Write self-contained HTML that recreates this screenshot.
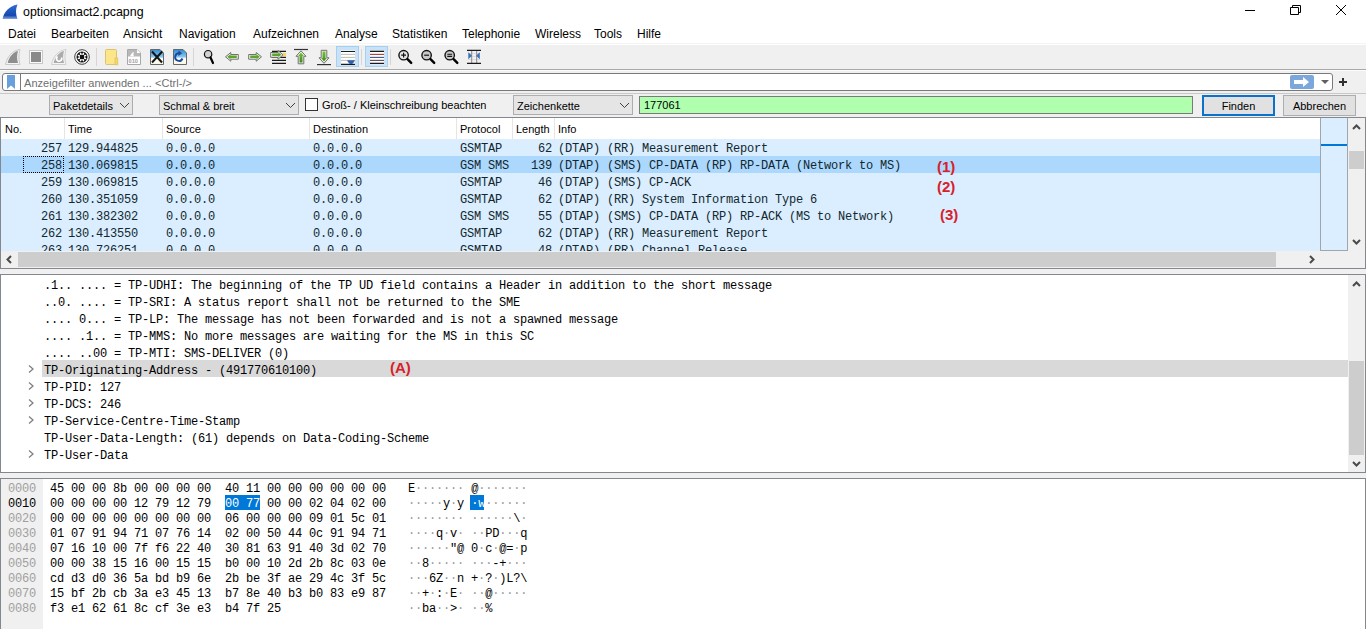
<!DOCTYPE html>
<html><head><meta charset="utf-8">
<style>
*{margin:0;padding:0;box-sizing:border-box}
html,body{width:1366px;height:629px;overflow:hidden;background:#f0f0f0;font-family:"Liberation Sans",sans-serif;font-size:12px;color:#000;position:relative}
.abs{position:absolute}
svg{display:block}
.menu span{position:absolute;top:27px}
.m{position:absolute;top:2px;white-space:pre;font-family:"Liberation Mono",monospace;font-size:12px;letter-spacing:-0.2px;line-height:17px;color:#12272e}
.m2{white-space:pre;font-family:"Liberation Mono",monospace;font-size:12px;letter-spacing:-0.2px;line-height:17px;color:#000}
.m3{white-space:pre;font-family:"Liberation Mono",monospace;font-size:12px;letter-spacing:-0.2px;line-height:15px;color:#000}
.d{color:#9a9a9a}
.htxt{white-space:pre;color:#000;font-size:11px}
.red{color:#d8202a;font-weight:bold;font-size:15px;line-height:17px;white-space:pre}
.combo{position:absolute;background:#e5e5e5;border:1px solid #adadad;height:20px;top:95px;padding-left:3px;padding-top:1px;line-height:18px;white-space:pre;font-size:11px}
.btn{position:absolute;background:#e1e1e1;border:1px solid #adadad;height:21px;top:95px;text-align:center;line-height:19px;font-size:11px;padding-top:1px}
</style></head><body>
<div class="abs" style="left:0;top:0;width:1366px;height:45px;background:#fff"></div>
<svg class="abs" style="left:1px;top:3px" width="18" height="17"><defs><linearGradient id="fg" x1="0" y1="0" x2="0" y2="1"><stop offset="0" stop-color="#2f6fd0"/><stop offset="0.75" stop-color="#1448b0"/><stop offset="1" stop-color="#8aa8e0"/></linearGradient></defs><path d="M1.5 16 C3 9 8 3 16.5 1.5 C14.5 6 14.5 11 16.5 16 Z" fill="url(#fg)"/></svg>
<div class="abs" style="left:23px;top:5px;font-size:12.4px;white-space:pre">optionsimact2.pcapng</div>
<svg class="abs" style="left:1230px;top:0" width="136" height="22" viewBox="1230 0 136 22"><path d="M1245 10.5 H1255" stroke="#000" stroke-width="1"/><path d="M1290.5 7.5 H1298.5 V14.5 H1290.5 Z M1292.5 7.5 V5.5 H1300.5 V12.5 H1298.5" fill="none" stroke="#000" stroke-width="1"/><path d="M1336 5 L1346 15 M1346 5 L1336 15" stroke="#000" stroke-width="1"/></svg>
<div class="menu">
  <span style="left:8px">Datei</span>
  <span style="left:51px">Bearbeiten</span>
  <span style="left:123px">Ansicht</span>
  <span style="left:179px">Navigation</span>
  <span style="left:253px">Aufzeichnen</span>
  <span style="left:335px">Analyse</span>
  <span style="left:392px">Statistiken</span>
  <span style="left:462px">Telephonie</span>
  <span style="left:535px">Wireless</span>
  <span style="left:594px">Tools</span>
  <span style="left:637px">Hilfe</span>
</div>
<div class="abs" style="left:0;top:45px;width:1366px;height:24px;background:#f0f0f0"></div>
<div class="abs" style="left:0;top:69px;width:1366px;height:1px;background:#a8a8a8"></div>
<div class="abs" style="left:0;top:70px;width:1366px;height:1px;background:#fcfcfc"></div>
<div class="abs" style="left:0;top:43px;width:1366px;height:1px;background:#f4f4f4"></div>
<!-- filter bar -->
<div class="abs" style="left:2px;top:73px;width:1331px;height:18px;background:#fff;border:1px solid #7a7a7a;border-radius:3px"></div>
<svg class="abs" style="left:7px;top:75px" width="9" height="14"><path d="M0 0 H8 V14 L4 10.5 L0 14 Z" fill="#6a9fdd"/></svg>
<div class="abs" style="left:20px;top:74px;width:1px;height:16px;background:#7a7a7a"></div>
<div class="abs" style="left:24px;top:77px;color:#6e6e6e;white-space:pre;font-size:11px;letter-spacing:0.05px">Anzeigefilter anwenden ... &lt;Ctrl-/&gt;</div>
<div class="abs" style="left:1290px;top:75px;width:24px;height:14px;background:#7ba7dd;border-radius:2px"></div>
<svg class="abs" style="left:1292px;top:76px" width="20" height="12"><path d="M2 4 H11 V1 L17 6 L11 11 V8 H2 Z" fill="#fff"/></svg>
<svg class="abs" style="left:1320px;top:79px" width="10" height="6"><path d="M1 1 H9 L5 5 Z" fill="#606060"/></svg>
<svg class="abs" style="left:1338px;top:77px" width="10" height="10"><path d="M5 1 V9 M1 5 H9" stroke="#303030" stroke-width="2"/></svg>
<div class="abs" style="left:0;top:93px;width:1366px;height:1px;background:#c8c8c8"></div>
<!-- find bar -->
<div class="combo" style="left:49px;width:84px">Paketdetails</div>
<svg class="abs" style="left:119px;top:102px" width="11" height="7"><path d="M1 1 L5.5 5.5 L10 1" fill="none" stroke="#404040" stroke-width="1"/></svg>
<div class="combo" style="left:159px;width:140px">Schmal &amp; breit</div>
<svg class="abs" style="left:285px;top:102px" width="11" height="7"><path d="M1 1 L5.5 5.5 L10 1" fill="none" stroke="#404040" stroke-width="1"/></svg>
<div class="abs" style="left:305px;top:98px;width:13px;height:13px;background:#fff;border:1px solid #333"></div>
<div class="abs" style="left:322px;top:99px;white-space:pre;font-size:11px">Groß- / Kleinschreibung beachten</div>
<div class="combo" style="left:513px;width:120px">Zeichenkette</div>
<svg class="abs" style="left:619px;top:102px" width="11" height="7"><path d="M1 1 L5.5 5.5 L10 1" fill="none" stroke="#404040" stroke-width="1"/></svg>
<div class="abs" style="left:639px;top:96px;width:554px;height:18px;background:#afffaf;border:1px solid #7a7a7a;padding-left:4px;line-height:17px;font-size:11px">177061</div>
<div class="btn" style="left:1202px;width:73px;border:2px solid #0a72cc;line-height:17px">Finden</div>
<div class="btn" style="left:1283px;width:73px">Abbrechen</div>

<!-- toolbar -->
<div class="abs" style="left:336px;top:46px;width:23px;height:21px;background:#c9e2f8;border:1px solid #a6cff0"></div>
<div class="abs" style="left:365px;top:46px;width:23px;height:21px;background:#c9e2f8;border:1px solid #a6cff0"></div>
<svg class="abs" style="left:0;top:0" width="500" height="70" viewBox="0 0 500 70">
<defs>
 <linearGradient id="bl" x1="0" y1="0" x2="0" y2="1"><stop offset="0" stop-color="#2a8ad6"/><stop offset="0.5" stop-color="#8cc8ee"/><stop offset="0.6" stop-color="#ffffff"/><stop offset="1" stop-color="#f8f6e0"/></linearGradient>
 <linearGradient id="gr" x1="0" y1="0" x2="0" y2="1"><stop offset="0" stop-color="#7cc040"/><stop offset="1" stop-color="#3d8a1a"/></linearGradient>
</defs>
<!-- separators -->
<path d="M96.5 48 V66 M193.5 48 V66 M361.5 49 V65 M390.5 49 V65" stroke="#d6d6d6" stroke-width="1"/>
<!-- 1 fin -->
<path d="M5.5 64.5 C7 57 12 50.5 20 49.5 C18.5 54 18.5 60 20 64.5 Z" fill="#f4f4f4" stroke="#c8c8c8" stroke-width="1"/>
<path d="M7.7 63 C9 57 13 52 18 51 C16.8 55 16.8 59 18 63 Z" fill="#8e8e8e"/>
<!-- 2 stop -->
<rect x="29.5" y="50.5" width="13" height="13" fill="#fafafa" stroke="#c8c8c8"/>
<rect x="31" y="52" width="10" height="10" fill="#8a8a8a"/>
<!-- 3 restart fin -->
<path d="M51.5 64.5 C53 57 58 50.5 66 49.5 C64.5 54 64.5 60 66 64.5 Z" fill="#f4f4f4" stroke="#cfcfcf" stroke-width="1"/>
<path d="M53.7 63 C55 57 59 52 64 51 C62.8 55 62.8 59 64 63 Z" fill="#ababab"/>
<path d="M57.5 56.5 A2.6 2.6 0 1 0 61.5 57.5" fill="none" stroke="#fff" stroke-width="1.6"/>
<!-- 4 gear -->
<circle cx="82" cy="57" r="7.3" fill="#fff" stroke="#2a2a2a" stroke-width="0.9"/>
<circle cx="82" cy="57" r="5.5" fill="#151515"/>
<path d="M82.46 53.83 L83.24 52.57 L84.26 52.99 L83.92 54.44 L84.56 55.08 L86.01 54.74 L86.43 55.76 L85.17 56.54 L85.17 57.46 L86.43 58.24 L86.01 59.26 L84.56 58.92 L83.92 59.56 L84.26 61.01 L83.24 61.43 L82.46 60.17 L81.54 60.17 L80.76 61.43 L79.74 61.01 L80.08 59.56 L79.44 58.92 L77.99 59.26 L77.57 58.24 L78.83 57.46 L78.83 56.54 L77.57 55.76 L77.99 54.74 L79.44 55.08 L80.08 54.44 L79.74 52.99 L80.76 52.57 L81.54 53.83 Z" fill="#fff"/>
<rect x="79.8" y="54.8" width="4.4" height="4.4" rx="1" fill="#111"/>
<!-- 5 folder -->
<rect x="105.5" y="49.5" width="11" height="15" rx="1" fill="#fde58a" stroke="#dcc46e"/>
<rect x="115" y="58" width="2.8" height="6.8" fill="#f8d860" stroke="#dcc46e" stroke-width="0.8"/>
<!-- 6 save doc -->
<path d="M127.5 49.5 H137 L140.5 53 V64.5 H127.5 Z" fill="#fff" stroke="#a8a8a8"/>
<path d="M128 50 H136.8 L140 53.2 V56.5 H128 Z" fill="#b8b8b8"/>
<path d="M137 49.8 V53 H140.3" fill="#fff"/>
<path d="M130 56.3 C131 54 132 52.5 134 52 C133.3 53.5 133.3 55 134 56.3 Z" fill="#fff"/>
<text x="128.6" y="62.6" font-family="Liberation Sans" font-size="5.6" font-weight="bold" fill="#a0a0a0">010</text>
<!-- 7 close doc -->
<path d="M150.5 49.5 H160 L163.5 53 V64.5 H150.5 Z" fill="url(#bl)" stroke="#686868"/>
<path d="M152 51.5 L162 62.5 M162.2 51.5 L152 62.5" stroke="#141414" stroke-width="2"/>
<!-- 8 reload doc -->
<path d="M173.5 49.5 H183 L186.5 53 V64.5 H173.5 Z" fill="url(#bl)" stroke="#686868"/>
<path d="M182.5 58.5 A3.8 3.8 0 1 1 179.6 53.3" fill="none" stroke="#1e4c9c" stroke-width="2"/>
<path d="M178.5 50.6 L182.2 53.3 L178.3 56 Z" fill="#1e4c9c"/>
<!-- 9 find -->
<circle cx="208.1" cy="54.2" r="3.7" fill="#d2d2d2" stroke="#111" stroke-width="1.2"/>
<path d="M210.5 57.5 L213 63" stroke="#000" stroke-width="2.2" stroke-linecap="round"/>
<!-- 10 left arrow -->
<path d="M225.5 56.8 L230.8 52.5 V54.5 H238.3 V59.2 H230.8 V61.2 Z" fill="#eef8e6" stroke="#707070" stroke-width="1"/>
<path d="M227.3 56.8 L230.5 54.2 V55.6 H236.8 V58 H230.5 V59.4 Z" fill="#5da52a"/>
<!-- 11 right arrow -->
<path d="M261.5 56.8 L256.2 52.5 V54.5 H248.7 V59.2 H256.2 V61.2 Z" fill="#eef8e6" stroke="#707070" stroke-width="1"/>
<path d="M259.7 56.8 L256.5 54.2 V55.6 H250.2 V58 H256.5 V59.4 Z" fill="#5da52a"/>
<!-- 12 go to packet -->
<path d="M272 51.4 H286 M272 57.4 H286 M272 60.4 H286 M272 63.4 H286" stroke="#1a1a1a" stroke-width="1.1"/>
<rect x="283" y="53" width="3" height="3.2" fill="#f5d860"/>
<path d="M283 54.8 L278 50.5 V52.5 H270.7 V57.3 H278 V59.3 Z" fill="#eef8e6" stroke="#707070" stroke-width="1"/>
<path d="M281.3 54.8 L278.3 52.3 V53.6 H272.2 V56 H278.3 V57.3 Z" fill="#5da52a"/>
<!-- 13 first packet -->
<path d="M294 49.5 H308" stroke="#333" stroke-width="1.2"/>
<path d="M301 50.8 L306 56.3 H303.8 V63.8 H298.2 V56.3 H296 Z" fill="#eef8e6" stroke="#707070" stroke-width="1"/>
<path d="M301 52.5 L303.8 56 H302.5 V62.5 H299.5 V56 H298.2 Z" fill="url(#gr)"/>
<!-- 14 last packet -->
<path d="M317 64.6 H331" stroke="#333" stroke-width="1.2"/>
<path d="M324 63.3 L329 57.8 H326.8 V50.3 H321.2 V57.8 H319 Z" fill="#eef8e6" stroke="#707070" stroke-width="1"/>
<path d="M324 61.6 L326.8 58.1 H325.5 V51.6 H322.5 V58.1 H321.2 Z" fill="url(#gr)"/>
<!-- 15 autoscroll -->
<rect x="341" y="50.5" width="14" height="14.5" fill="#fff"/>
<path d="M341 51.5 H355 M341 64.4 H355" stroke="#1a1a1a" stroke-width="1.1"/>
<path d="M341 54.4 H355 M341 57.4 H355 M341 60.4 H355" stroke="#b4b4ac" stroke-width="0.9"/>
<path d="M347.2 60.2 H354.8 C354.5 62 353 63.3 351.8 64 H350.2 C349 63.3 347.5 62 347.2 60.2 Z" fill="#2f62ab"/>
<!-- 16 colorize -->
<rect x="370" y="50.8" width="14" height="13.5" fill="#fff"/>
<path d="M370 51.4 H384 M370 63.4 H384" stroke="#1a1a1a" stroke-width="1.1"/>
<path d="M370 54.4 H384" stroke="#b03a30" stroke-width="1.1"/>
<path d="M370 57.4 H384" stroke="#2f5a8a" stroke-width="1.1"/>
<path d="M370 60.4 H384" stroke="#604060" stroke-width="1.1"/>
<!-- 17 zoom in -->
<circle cx="403.6" cy="55.2" r="4.7" fill="#e4e4e4" stroke="#111" stroke-width="1.4"/>
<path d="M407.5 59.2 L411.2 62.9" stroke="#000" stroke-width="2.4" stroke-linecap="round"/>
<path d="M401.2 55.2 H406 M403.6 52.8 V57.6" stroke="#111" stroke-width="1.2"/>
<!-- 18 zoom out -->
<circle cx="426.6" cy="55.2" r="4.7" fill="#c8c8c8" stroke="#111" stroke-width="1.4"/>
<path d="M430.5 59.2 L434.2 62.9" stroke="#000" stroke-width="2.4" stroke-linecap="round"/>
<path d="M424.2 55.2 H429" stroke="#111" stroke-width="1.2"/>
<!-- 19 zoom 100 -->
<circle cx="449.7" cy="55.2" r="4.7" fill="#c8c8c8" stroke="#111" stroke-width="1.4"/>
<path d="M453.6 59.2 L457.3 62.9" stroke="#000" stroke-width="2.4" stroke-linecap="round"/>
<path d="M447.3 54.2 H452.1 M447.3 56.4 H452.1" stroke="#111" stroke-width="1.1"/>
<!-- 20 resize columns -->
<path d="M468 53.5 H480 M468 56.5 H480 M468 59.5 H480" stroke="#d8d8d8" stroke-width="0.8"/>
<path d="M471.7 50.5 V63.5 M476.7 50.5 V63.5" stroke="#8a8a8a" stroke-width="1"/>
<path d="M467 50.4 H481 M467 63.4 H481" stroke="#1a1a1a" stroke-width="1.1"/>
<path d="M468.3 52.3 L472 55.8 L468.3 59.3 Z M479.8 52.3 L476.1 55.8 L479.8 59.3 Z" fill="#3a72c0"/>
</svg>

<div class="abs" style="left:0;top:117px;width:1366px;height:152px;border:1px solid #828790;background:#fff"></div>
<div class="abs hdr" style="left:1px;top:118px;width:1319px;height:21px"></div>
<div class="abs" style="left:64px;top:118px;width:1px;height:21px;background:#e5e5e5"></div>
<div class="abs" style="left:162px;top:118px;width:1px;height:21px;background:#e5e5e5"></div>
<div class="abs" style="left:309px;top:118px;width:1px;height:21px;background:#e5e5e5"></div>
<div class="abs" style="left:456px;top:118px;width:1px;height:21px;background:#e5e5e5"></div>
<div class="abs" style="left:512px;top:118px;width:1px;height:21px;background:#e5e5e5"></div>
<div class="abs" style="left:554px;top:118px;width:1px;height:21px;background:#e5e5e5"></div>
<div class="abs htxt" style="left:5px;top:123px">No.</div>
<div class="abs htxt" style="left:68px;top:123px">Time</div>
<div class="abs htxt" style="left:166px;top:123px">Source</div>
<div class="abs htxt" style="left:313px;top:123px">Destination</div>
<div class="abs htxt" style="left:460px;top:123px">Protocol</div>
<div class="abs htxt" style="left:516px;top:123px">Length</div>
<div class="abs htxt" style="left:558px;top:123px">Info</div>
<div class="abs" style="left:1px;top:139px;width:1319px;height:17px;background:#daeeff;overflow:hidden">
<span class="m" style="left:40px">257</span>
<span class="m" style="left:67px">129.944825</span>
<span class="m" style="left:165px">0.0.0.0</span>
<span class="m" style="left:312px">0.0.0.0</span>
<span class="m" style="left:459px">GSMTAP</span>
<span class="m" style="left:537px">62</span>
<span class="m" style="left:557px">(DTAP) (RR) Measurement Report</span>
</div>
<div class="abs" style="left:1px;top:156px;width:1319px;height:17px;background:#acd8fe;overflow:hidden">
<span class="m" style="left:40px">258</span>
<span class="m" style="left:67px">130.069815</span>
<span class="m" style="left:165px">0.0.0.0</span>
<span class="m" style="left:312px">0.0.0.0</span>
<span class="m" style="left:459px">GSM SMS</span>
<span class="m" style="left:530px">139</span>
<span class="m" style="left:557px">(DTAP) (SMS) CP-DATA (RP) RP-DATA (Network to MS)</span>
</div>
<div class="abs" style="left:1px;top:173px;width:1319px;height:17px;background:#daeeff;overflow:hidden">
<span class="m" style="left:40px">259</span>
<span class="m" style="left:67px">130.069815</span>
<span class="m" style="left:165px">0.0.0.0</span>
<span class="m" style="left:312px">0.0.0.0</span>
<span class="m" style="left:459px">GSMTAP</span>
<span class="m" style="left:537px">46</span>
<span class="m" style="left:557px">(DTAP) (SMS) CP-ACK</span>
</div>
<div class="abs" style="left:1px;top:190px;width:1319px;height:17px;background:#daeeff;overflow:hidden">
<span class="m" style="left:40px">260</span>
<span class="m" style="left:67px">130.351059</span>
<span class="m" style="left:165px">0.0.0.0</span>
<span class="m" style="left:312px">0.0.0.0</span>
<span class="m" style="left:459px">GSMTAP</span>
<span class="m" style="left:537px">62</span>
<span class="m" style="left:557px">(DTAP) (RR) System Information Type 6</span>
</div>
<div class="abs" style="left:1px;top:207px;width:1319px;height:17px;background:#daeeff;overflow:hidden">
<span class="m" style="left:40px">261</span>
<span class="m" style="left:67px">130.382302</span>
<span class="m" style="left:165px">0.0.0.0</span>
<span class="m" style="left:312px">0.0.0.0</span>
<span class="m" style="left:459px">GSM SMS</span>
<span class="m" style="left:537px">55</span>
<span class="m" style="left:557px">(DTAP) (SMS) CP-DATA (RP) RP-ACK (MS to Network)</span>
</div>
<div class="abs" style="left:1px;top:224px;width:1319px;height:17px;background:#daeeff;overflow:hidden">
<span class="m" style="left:40px">262</span>
<span class="m" style="left:67px">130.413550</span>
<span class="m" style="left:165px">0.0.0.0</span>
<span class="m" style="left:312px">0.0.0.0</span>
<span class="m" style="left:459px">GSMTAP</span>
<span class="m" style="left:537px">62</span>
<span class="m" style="left:557px">(DTAP) (RR) Measurement Report</span>
</div>
<div class="abs" style="left:1px;top:241px;width:1319px;height:10px;background:#daeeff;overflow:hidden">
<span class="m" style="left:40px">263</span>
<span class="m" style="left:67px">130.726251</span>
<span class="m" style="left:165px">0.0.0.0</span>
<span class="m" style="left:312px">0.0.0.0</span>
<span class="m" style="left:459px">GSMTAP</span>
<span class="m" style="left:537px">48</span>
<span class="m" style="left:557px">(DTAP) (RR) Channel Release</span>
</div>
<div class="abs" style="left:23px;top:156px;width:41px;height:17px;border:1px dotted #000"></div>
<div class="abs red" style="left:937px;top:158px">(1)</div>
<div class="abs red" style="left:937px;top:178px">(2)</div>
<div class="abs red" style="left:940px;top:206px">(3)</div>
<div class="abs" style="left:1320px;top:118px;width:28px;height:133px;background:#daeeff;border-left:1px solid #a0a6ae;border-right:1px solid #a0a6ae;border-bottom:1px solid #a0a6ae"></div>
<div class="abs" style="left:1321px;top:144px;width:26px;height:2px;background:#0078d7"></div>
<div class="abs" style="left:1348px;top:118px;width:17px;height:133px;background:#f0f0f0"></div>
<div class="abs" style="left:1349px;top:151px;width:15px;height:18px;background:#cdcdcd"></div>
<svg class="abs" style="left:1352px;top:123px" width="9" height="8"><path d="M1 6 L4.5 2.5 L8 6" fill="none" stroke="#4a4a4a" stroke-width="2"/></svg>
<svg class="abs" style="left:1352px;top:238px" width="9" height="8"><path d="M1 2 L4.5 5.5 L8 2" fill="none" stroke="#4a4a4a" stroke-width="2"/></svg>
<div class="abs" style="left:1px;top:251px;width:1364px;height:17px;background:#f0f0f0"></div>
<div class="abs" style="left:18px;top:252px;width:1258px;height:15px;background:#cdcdcd"></div>
<svg class="abs" style="left:5px;top:255px" width="8" height="9"><path d="M6 1 L2.5 4.5 L6 8" fill="none" stroke="#4a4a4a" stroke-width="2"/></svg>
<svg class="abs" style="left:1308px;top:255px" width="8" height="9"><path d="M2 1 L5.5 4.5 L2 8" fill="none" stroke="#4a4a4a" stroke-width="2"/></svg>
<div class="abs" style="left:0;top:274px;width:1366px;height:199px;border:1px solid #828790;background:#fff"></div>
<div class="abs m2" style="left:44px;top:278px">.1.. .... = TP-UDHI: The beginning of the TP UD field contains a Header in addition to the short message</div>
<div class="abs m2" style="left:44px;top:295px">..0. .... = TP-SRI: A status report shall not be returned to the SME</div>
<div class="abs m2" style="left:44px;top:312px">.... 0... = TP-LP: The message has not been forwarded and is not a spawned message</div>
<div class="abs m2" style="left:44px;top:329px">.... .1.. = TP-MMS: No more messages are waiting for the MS in this SC</div>
<div class="abs m2" style="left:44px;top:346px">.... ..00 = TP-MTI: SMS-DELIVER (0)</div>
<div class="abs" style="left:42px;top:360px;width:1306px;height:17px;background:#d9d9d9"></div>
<svg class="abs" style="left:27px;top:364px" width="8" height="10"><path d="M2 1.5 L6 5 L2 8.5" fill="none" stroke="#808080" stroke-width="1.3"/></svg>
<div class="abs m2" style="left:44px;top:363px">TP-Originating-Address - (491770610100)</div>
<svg class="abs" style="left:27px;top:381px" width="8" height="10"><path d="M2 1.5 L6 5 L2 8.5" fill="none" stroke="#808080" stroke-width="1.3"/></svg>
<div class="abs m2" style="left:44px;top:380px">TP-PID: 127</div>
<svg class="abs" style="left:27px;top:398px" width="8" height="10"><path d="M2 1.5 L6 5 L2 8.5" fill="none" stroke="#808080" stroke-width="1.3"/></svg>
<div class="abs m2" style="left:44px;top:397px">TP-DCS: 246</div>
<svg class="abs" style="left:27px;top:415px" width="8" height="10"><path d="M2 1.5 L6 5 L2 8.5" fill="none" stroke="#808080" stroke-width="1.3"/></svg>
<div class="abs m2" style="left:44px;top:414px">TP-Service-Centre-Time-Stamp</div>
<div class="abs m2" style="left:44px;top:431px">TP-User-Data-Length: (61) depends on Data-Coding-Scheme</div>
<svg class="abs" style="left:27px;top:449px" width="8" height="10"><path d="M2 1.5 L6 5 L2 8.5" fill="none" stroke="#808080" stroke-width="1.3"/></svg>
<div class="abs m2" style="left:44px;top:448px">TP-User-Data</div>
<div class="abs red" style="left:390px;top:359px">(A)</div>
<div class="abs" style="left:1348px;top:275px;width:17px;height:197px;background:#f0f0f0"></div>
<div class="abs" style="left:1349px;top:361px;width:15px;height:94px;background:#cdcdcd"></div>
<svg class="abs" style="left:1352px;top:280px" width="9" height="8"><path d="M1 6 L4.5 2.5 L8 6" fill="none" stroke="#4a4a4a" stroke-width="2"/></svg>
<svg class="abs" style="left:1352px;top:460px" width="9" height="8"><path d="M1 2 L4.5 5.5 L8 2" fill="none" stroke="#4a4a4a" stroke-width="2"/></svg>
<div class="abs" style="left:0;top:478px;width:1366px;height:160px;border:1px solid #828790;background:#fff"></div>
<div class="abs" style="left:1px;top:479px;width:42px;height:150px;background:#f0f0f0"></div>
<div class="abs m3" style="left:8px;top:482px;color:#a0a0a0">0000</div>
<div class="abs m3" style="left:50px;top:482px">45 00 00 8b 00 00 00 00  40 11 00 00 00 00 00 00</div>
<div class="abs m3" style="left:408px;top:482px">E<span class="d">·</span><span class="d">·</span><span class="d">·</span><span class="d">·</span><span class="d">·</span><span class="d">·</span><span class="d">·</span> @<span class="d">·</span><span class="d">·</span><span class="d">·</span><span class="d">·</span><span class="d">·</span><span class="d">·</span><span class="d">·</span></div>
<div class="abs m3" style="left:8px;top:497px;color:#000">0010</div>
<div class="abs" style="left:225px;top:495px;width:35px;height:15px;background:#0078d7"></div>
<div class="abs" style="left:470px;top:495px;width:14px;height:15px;background:#0078d7"></div>
<div class="abs m3" style="left:50px;top:497px">00 00 00 00 12 79 12 79  <span style="color:#fff">00 77</span> 00 00 02 04 02 00</div>
<div class="abs m3" style="left:408px;top:497px"><span class="d">·</span><span class="d">·</span><span class="d">·</span><span class="d">·</span><span class="d">·</span>y<span class="d">·</span>y <span style="color:#fff">·w</span><span class="d">·</span><span class="d">·</span><span class="d">·</span><span class="d">·</span><span class="d">·</span><span class="d">·</span></div>
<div class="abs m3" style="left:8px;top:512px;color:#a0a0a0">0020</div>
<div class="abs m3" style="left:50px;top:512px">00 00 00 00 00 00 00 00  06 00 00 00 09 01 5c 01</div>
<div class="abs m3" style="left:408px;top:512px"><span class="d">·</span><span class="d">·</span><span class="d">·</span><span class="d">·</span><span class="d">·</span><span class="d">·</span><span class="d">·</span><span class="d">·</span> <span class="d">·</span><span class="d">·</span><span class="d">·</span><span class="d">·</span><span class="d">·</span><span class="d">·</span>\<span class="d">·</span></div>
<div class="abs m3" style="left:8px;top:527px;color:#a0a0a0">0030</div>
<div class="abs m3" style="left:50px;top:527px">01 07 91 94 71 07 76 14  02 00 50 44 0c 91 94 71</div>
<div class="abs m3" style="left:408px;top:527px"><span class="d">·</span><span class="d">·</span><span class="d">·</span><span class="d">·</span>q<span class="d">·</span>v<span class="d">·</span> <span class="d">·</span><span class="d">·</span>PD<span class="d">·</span><span class="d">·</span><span class="d">·</span>q</div>
<div class="abs m3" style="left:8px;top:542px;color:#a0a0a0">0040</div>
<div class="abs m3" style="left:50px;top:542px">07 16 10 00 7f f6 22 40  30 81 63 91 40 3d 02 70</div>
<div class="abs m3" style="left:408px;top:542px"><span class="d">·</span><span class="d">·</span><span class="d">·</span><span class="d">·</span><span class="d">·</span><span class="d">·</span>&quot;@ 0<span class="d">·</span>c<span class="d">·</span>@=<span class="d">·</span>p</div>
<div class="abs m3" style="left:8px;top:557px;color:#a0a0a0">0050</div>
<div class="abs m3" style="left:50px;top:557px">00 00 38 15 16 00 15 15  b0 00 10 2d 2b 8c 03 0e</div>
<div class="abs m3" style="left:408px;top:557px"><span class="d">·</span><span class="d">·</span>8<span class="d">·</span><span class="d">·</span><span class="d">·</span><span class="d">·</span><span class="d">·</span> <span class="d">·</span><span class="d">·</span><span class="d">·</span>-+<span class="d">·</span><span class="d">·</span><span class="d">·</span></div>
<div class="abs m3" style="left:8px;top:572px;color:#a0a0a0">0060</div>
<div class="abs m3" style="left:50px;top:572px">cd d3 d0 36 5a bd b9 6e  2b be 3f ae 29 4c 3f 5c</div>
<div class="abs m3" style="left:408px;top:572px"><span class="d">·</span><span class="d">·</span><span class="d">·</span>6Z<span class="d">·</span><span class="d">·</span>n +<span class="d">·</span>?<span class="d">·</span>)L?\</div>
<div class="abs m3" style="left:8px;top:587px;color:#a0a0a0">0070</div>
<div class="abs m3" style="left:50px;top:587px">15 bf 2b cb 3a e3 45 13  b7 8e 40 b3 b0 83 e9 87</div>
<div class="abs m3" style="left:408px;top:587px"><span class="d">·</span><span class="d">·</span>+<span class="d">·</span>:<span class="d">·</span>E<span class="d">·</span> <span class="d">·</span><span class="d">·</span>@<span class="d">·</span><span class="d">·</span><span class="d">·</span><span class="d">·</span><span class="d">·</span></div>
<div class="abs m3" style="left:8px;top:602px;color:#a0a0a0">0080</div>
<div class="abs m3" style="left:50px;top:602px">f3 e1 62 61 8c cf 3e e3  b4 7f 25</div>
<div class="abs m3" style="left:408px;top:602px"><span class="d">·</span><span class="d">·</span>ba<span class="d">·</span><span class="d">·</span>&gt;<span class="d">·</span> <span class="d">·</span><span class="d">·</span>%</div>
</body></html>
